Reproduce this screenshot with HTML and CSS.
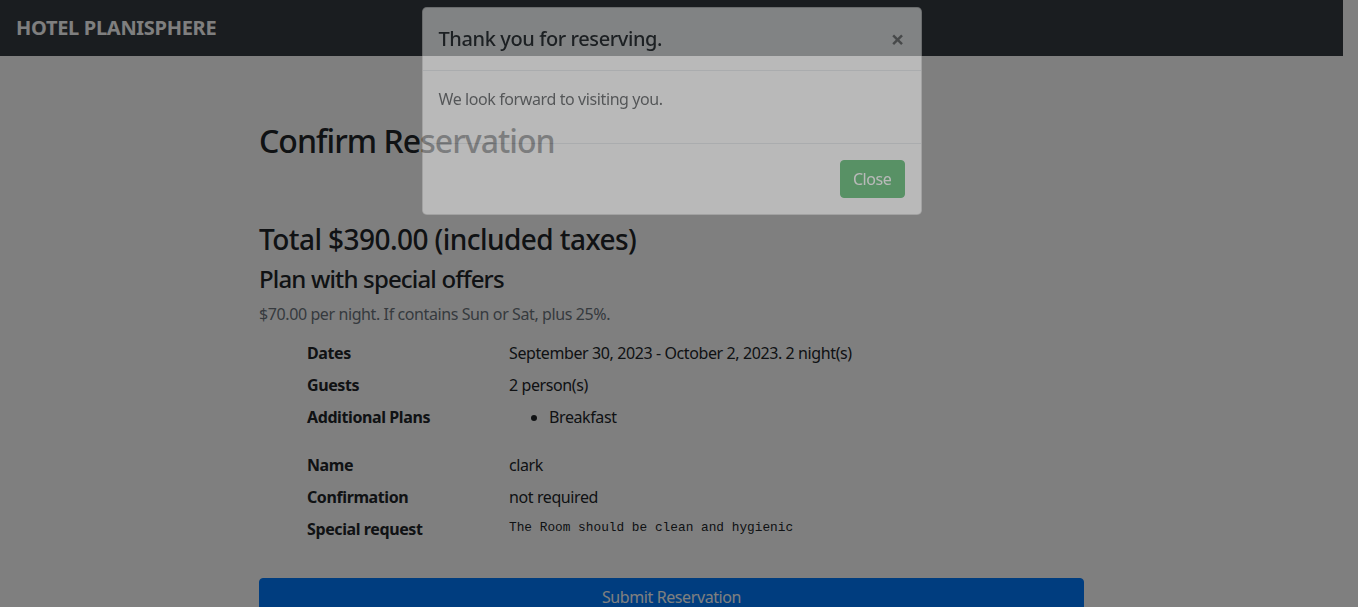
FILE: index.html
```html
<!DOCTYPE html>
<html lang="en">
<head>
<meta charset="utf-8">
<title>Confirm Reservation | HOTEL PLANISPHERE</title>
<link rel="stylesheet" href="styles.css">
</head>
<body class="modal-open">
  <nav class="navbar">
    <span class="brand">HOTEL PLANISPHERE</span>
  </nav>
  <div class="container">
    <main class="content">
      <h2 class="page-title">Confirm Reservation</h2>
      <section class="summary">
        <h3 class="total">Total $390.00 (included taxes)</h3>
        <h4 class="plan">Plan with special offers</h4>
        <p class="muted">$70.00 per night. If contains Sun or Sat, plus 25%.</p>
        <dl class="details">
          <dt>Dates</dt>
          <dd>September 30, 2023 - October 2, 2023. 2 night(s)</dd>
          <dt>Guests</dt>
          <dd>2 person(s)</dd>
          <dt>Additional Plans</dt>
          <dd><ul class="plans"><li>Breakfast</li></ul></dd>
          <dt>Name</dt>
          <dd>clark</dd>
          <dt>Confirmation</dt>
          <dd>not required</dd>
          <dt>Special request</dt>
          <dd><pre class="request">The Room should be clean and hygienic</pre></dd>
        </dl>
        <button class="submit" type="button">Submit Reservation</button>
      </section>
    </main>
  </div>

  <div class="backdrop"></div>
  <div class="modal">
    <div class="dialog">
      <div class="modal-content">
        <div class="modal-header">
          <h4 class="modal-title">Thank you for reserving.</h4>
          <button class="close" type="button">&times;</button>
        </div>
        <div class="modal-body">
          <p>We look forward to visiting you.</p>
        </div>
        <div class="modal-footer">
          <button class="btn-close" type="button">Close</button>
        </div>
      </div>
    </div>
  </div>
</body>
</html>
```
FILE: styles.css
```css
html, body {
  margin: 0;
  height: 100%;
  overflow: hidden;
}
body {
  font-family: "Noto Sans", "Open Sans", sans-serif;
  font-size: 16px;
  line-height: 1.5;
  letter-spacing: -0.025em;
  color: #212529;
  background: #fff;
  padding-right: 15px;
}
* { box-sizing: border-box; }

.navbar {
  height: 56px;
  background: #343a40;
  padding: 8px 16px;
  display: flex;
  align-items: center;
}
.brand {
  color: #fff;
  font-size: 20px;
  font-weight: 700;
  line-height: 30px;
  letter-spacing: -0.3px;
}

.container {
  max-width: 1140px;
  margin: 0 auto;
}
.content {
  width: 825px;
  margin: 0 auto;
  padding-top: 66px;
}
h2, h3, h4 {
  font-weight: 500;
  line-height: 1.2;
  margin: 0 0 8px;
}
.page-title {
  font-size: 32px;
  margin-bottom: 63px;
  letter-spacing: -0.03em;
}
.total { font-size: 28px; letter-spacing: -0.02em; }
.plan { font-size: 24px; letter-spacing: -0.035em; }
.muted {
  color: #6c757d;
  margin: 0 0 15px;
}
.details {
  display: grid;
  grid-template-columns: 202px 1fr;
  padding-left: 48px;
  margin: 0 0 16px;
  align-items: start;
}
.details dt {
  font-weight: 700;
  margin: 0 0 8px;
}
.details dd {
  margin: 0 0 8px;
}
.plans {
  margin: 0 0 16px;
  padding-left: 40px;
}
.request {
  font-family: "Liberation Mono", "DejaVu Sans Mono", monospace;
  font-size: 12.8px;
  line-height: 21px;
  letter-spacing: 0;
  margin: 0 0 16px;
  color: #212529;
}
.submit {
  display: block;
  width: 100%;
  height: 38px;
  border: 1px solid #007bff;
  background: #007bff;
  color: #fff;
  font: inherit;
  letter-spacing: inherit;
  border-radius: 4px;
  padding: 6px 12px;
}

.backdrop {
  position: fixed;
  inset: 0;
  background: #000;
  opacity: 0.5;
  z-index: 10;
}
.modal {
  position: fixed;
  inset: 0;
  z-index: 20;
  padding-right: 15px;
  opacity: 0.45;
}
.dialog {
  width: 500px;
  margin: 7px auto 0;
}
.modal-content {
  background: #fff;
  border: 1px solid rgba(0, 0, 0, 0.2);
  border-radius: 4.8px;
}
.modal-header {
  display: flex;
  align-items: flex-start;
  justify-content: space-between;
  padding: 16px;
  border-bottom: 1px solid #dee2e6;
}
.modal-title {
  font-size: 20px;
  line-height: 30px;
  margin: 0;
}
.close {
  background: none;
  border: 0;
  padding: 16px;
  margin: -16px -16px -16px auto;
  font-family: inherit;
  font-size: 24px;
  font-weight: 700;
  line-height: 30px;
  color: #000;
  opacity: 0.5;
}
.modal-body {
  padding: 16px;
}
.modal-body p {
  margin: 0 0 16px;
}
.modal-footer {
  display: flex;
  justify-content: flex-end;
  padding: 12px;
  border-top: 1px solid #dee2e6;
}
.btn-close {
  margin: 4px;
  height: 38px;
  padding: 6px 12px;
  background: #28a745;
  border: 1px solid #28a745;
  color: #fff;
  font: inherit;
  letter-spacing: inherit;
  border-radius: 4px;
}
```
